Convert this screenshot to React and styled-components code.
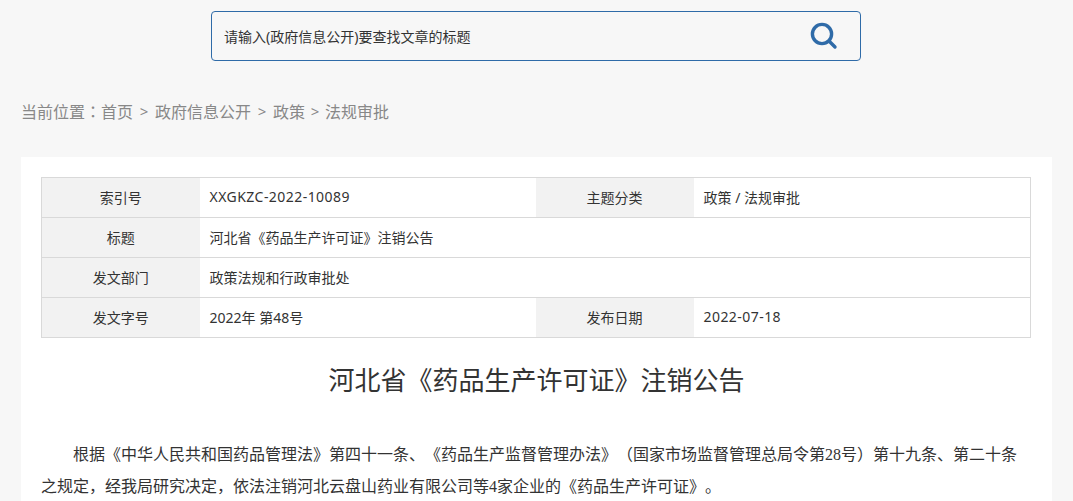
import React from "react";
import styled, { createGlobalStyle } from "styled-components";

const GlobalStyle = createGlobalStyle`
  html, body {
    margin: 0;
    padding: 0;
    background: #f7f7f7;
  }
  * {
    box-sizing: border-box;
  }
`;

const FONT = `"Noto Sans", "Noto Sans CJK SC", sans-serif`;

const rows = [
  [
    { label: "索引号", value: "XXGKZC-2022-10089", latin: true },
    { label: "主题分类", value: "政策 / 法规审批" },
  ],
  [{ label: "标题", value: "河北省《药品生产许可证》注销公告", span: 3 }],
  [{ label: "发文部门", value: "政策法规和行政审批处", span: 3 }],
  [
    { label: "发文字号", value: "2022年 第48号" },
    { label: "发布日期", value: "2022-07-18", latin: true },
  ],
];

const crumbs = [
  { name: "政府信息公开", gap: 22 },
  { name: "政策", gap: 22 },
  { name: "法规审批", gap: 20 },
];

export default function App() {
  return (
    <Page>
      <GlobalStyle />
      <SearchBar>
        <SearchInput placeholder="请输入(政府信息公开)要查找文章的标题" />
        <SearchButton aria-label="搜索">
          <svg width="30" height="30" viewBox="0 0 30 30" fill="none">
            <circle cx="13" cy="13" r="9.6" stroke="#2f6ba8" strokeWidth="3.4" />
            <path d="M20.5 20.5 L26 26" stroke="#2f6ba8" strokeWidth="3.4" strokeLinecap="round" />
          </svg>
        </SearchButton>
      </SearchBar>

      <Breadcrumb>
        <span>当前位置<Colon>：</Colon>首页</span>
        {crumbs.map((c) => (
          <React.Fragment key={c.name}>
            <Separator $gap={c.gap}>&gt;</Separator>
            <span>{c.name}</span>
          </React.Fragment>
        ))}
      </Breadcrumb>

      <Panel>
        <InfoTable>
          <colgroup>
            <col width="158" />
            <col width="336" />
            <col width="158" />
            <col />
          </colgroup>
          <tbody>
            {rows.map((row) => (
              <tr key={row[0].label}>
                {row.map((cell) => (
                  <React.Fragment key={cell.label}>
                    <LabelCell>{cell.label}</LabelCell>
                    <ValueCell colSpan={cell.span} $latin={cell.latin}>
                      {cell.value}
                    </ValueCell>
                  </React.Fragment>
                ))}
              </tr>
            ))}
          </tbody>
        </InfoTable>

        <Title>河北省《药品生产许可证》注销公告</Title>

        <Body>
          根据《中华人民共和国药品管理法》第四十一条、《药品生产监督管理办法》（国家市场监督管理总局令第28号）第十九条、第二十条之规定，经我局研究决定，依法注销河北云盘山药业有限公司等4家企业的《药品生产许可证》。
        </Body>
      </Panel>
    </Page>
  );
}

const Page = styled.div`
  height: 501px;
  overflow: hidden;
  padding: 11px 21px 0;
  font-family: ${FONT};
`;

const SearchBar = styled.div`
  width: 650px;
  height: 50px;
  margin-left: 190px;
  padding: 0 20px 0 12px;
  display: flex;
  align-items: center;
  background: #f7f7f7;
  border: 1px solid #2f6ba8;
  border-radius: 4px;
`;

const SearchInput = styled.input`
  flex: 1;
  height: 100%;
  padding: 0;
  border: 0;
  outline: 0;
  background: transparent;
  font-family: ${FONT};
  font-size: 14px;
  color: #333;
  &::placeholder {
    color: #333;
    opacity: 1;
  }
`;

const SearchButton = styled.button`
  width: 30px;
  height: 30px;
  padding: 0;
  margin-right: 1px;
  border: 0;
  background: transparent;
  display: flex;
`;

const Breadcrumb = styled.div`
  display: flex;
  align-items: center;
  height: 24px;
  margin-top: 38px;
  font-size: 16px;
  color: #888;
`;

const Colon = styled.span`
  font-family: "Noto Sans CJK TC", sans-serif;
`;

const Separator = styled.span`
  width: ${(p) => p.$gap}px;
  text-align: center;
  font-size: 15px;
`;

const Panel = styled.div`
  margin-top: 34px;
  height: 400px;
  padding: 20px;
  background: #fff;
`;

const InfoTable = styled.table`
  width: 990px;
  table-layout: fixed;
  border-collapse: collapse;
  border: 1px solid #d9d9d9;
  font-size: 14px;
  color: #333;
  tr {
    height: 40px;
    border-bottom: 1px solid #d9d9d9;
  }
`;

const LabelCell = styled.td`
  padding: 0 0 2px;
  text-align: center;
  background: #f2f2f2;
`;

const ValueCell = styled.td`
  padding: 0 0 2px 10px;
  text-align: left;
  letter-spacing: ${(p) => (p.$latin ? "0.45px" : "0")};
`;

const Title = styled.h1`
  margin: 20px 0 0;
  font-size: 26px;
  font-weight: 400;
  line-height: 44px;
  text-align: center;
  color: #333;
`;

const Body = styled.p`
  margin: 37px 0 0;
  font-family: "Liberation Serif", "Noto Sans CJK SC", serif;
  font-size: 16px;
  line-height: 32px;
  text-indent: 2em;
  text-spacing-trim: space-all;
  color: #333;
`;
